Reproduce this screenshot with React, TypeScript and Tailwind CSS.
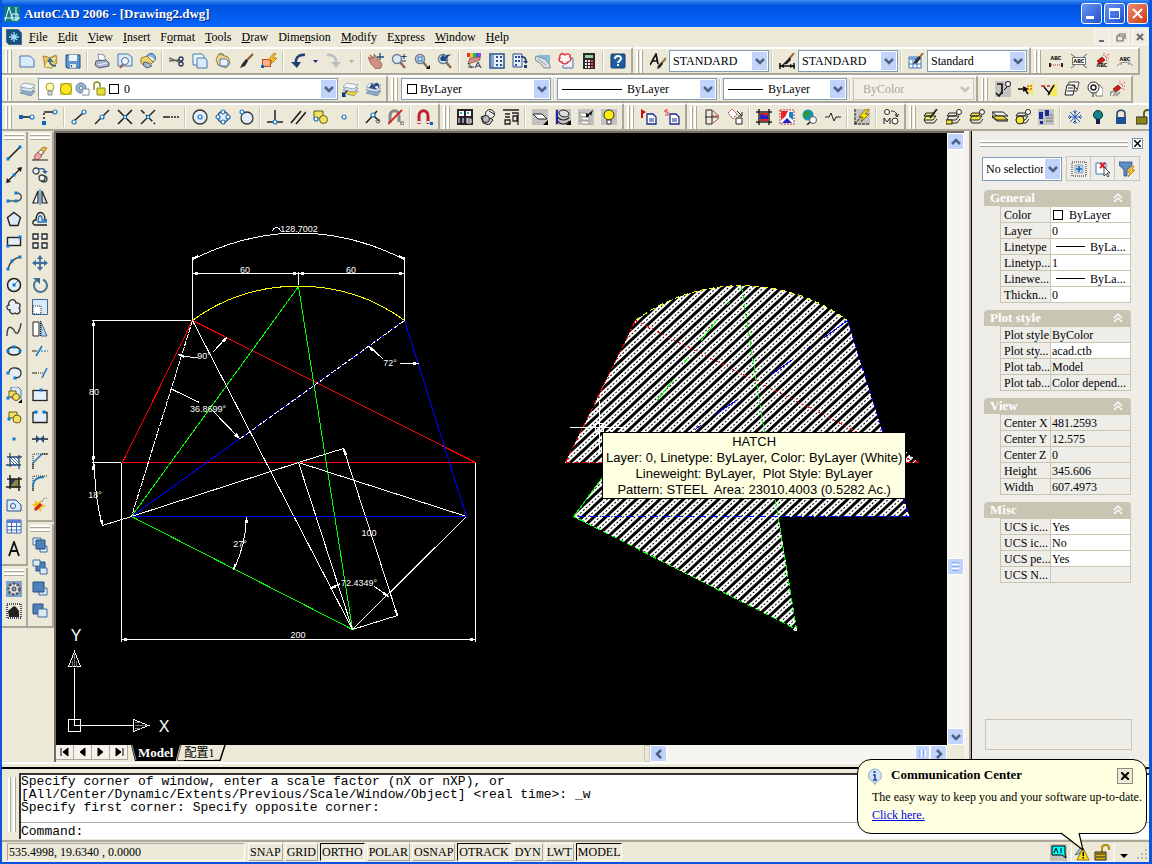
import React from "react";

const Ln = ({ d, c = "#222", w = 1, f = "none" }: { d: string; c?: string; w?: number; f?: string }) => (
  <path d={d} stroke={c} strokeWidth={w} fill={f} />
);
const Dot = ({ x, y }: { x: number; y: number }) => (
  <rect x={x - 1.5} y={y - 1.5} width="3" height="3" fill="#0a7bd8" />
);
const Ring = ({ x, y, r = 2 }: { x: number; y: number; r?: number }) => (
  <circle cx={x} cy={y} r={r} fill="#fff" stroke="#1673c4" strokeWidth="1.2" />
);
const Lens = ({ x = 6, y = 6 }: { x?: number; y?: number }) => (
  <>
    <path d={`M${x + 3} ${y + 3}l5 6`} stroke="#8a6a4a" strokeWidth="2.4" />
    <circle cx={x} cy={y} r="4.5" fill="#d6e9fa" stroke="#6f7f90" strokeWidth="1.5" />
  </>
);
const Stack = ({ c = "#8ea9c9" }: { c?: string }) => (
  <>
    <path d="M5 9l11 1-4 5L1 12z" fill={c} stroke="#5c7899" strokeWidth=".6" />
    <path d="M5 6l11 1-4 4L1 9z" fill="#dfe8f2" stroke="#5c7899" strokeWidth=".6" />
    <path d="M5 2l11 2-4 4L1 6z" fill="#f4f8fc" stroke="#5c7899" strokeWidth=".6" />
  </>
);
const Grey = () => <rect width="16" height="16" fill="#c3c2c0" />;
const Abc = ({ y }: { y: number }) => (
  <text x="8" y={y} fontSize="6" fontWeight="bold" textAnchor="middle" fontFamily="Liberation Mono, monospace">
    ABC
  </text>
);
const Burst = () => (
  <>
    <path d="M3 8l5-4 3 3-5 4z" fill="#d81818" stroke="#400" strokeWidth=".6" />
    <path d="M11 4l4-3M12 5h4M10 3V0M12 7l3 2" stroke="#e02020" strokeDasharray="1 1" />
  </>
);
const Sheets = ({ f = "none" }: { f?: string }) => (
  <>
    <path d="M3 4h9l-3 3H1zM3 7h10l-3 4H1z" fill={f} stroke="#222" />
    <path d="M1 11l2 3h8l3-4" fill="none" stroke="#222" />
  </>
);

const icons: Record<string, React.ReactNode> = {
  new: <path d="M1 3h10l4 4v7H1z" fill="#d8eafb" stroke="#4678ac" />,
  open: (
    <>
      <path d="M1 3l5 1 1 1 7-3 1 8-6 5-6-1z" fill="#e9c65c" stroke="#8a6c1c" strokeWidth=".7" />
      <path d="M2 14L6 6l9-3-5 12z" fill="#fbe79b" stroke="#a58428" strokeWidth=".6" />
      <path d="M14 13c-4 0-6-2-6-5M6 9l2-3 3 3" fill="none" stroke="#2c5d92" strokeWidth="1.6" />
    </>
  ),
  save: (
    <>
      <path d="M1 2h14v13H2l-1-1z" fill="#5e97cf" stroke="#234f80" />
      <path d="M4 2h8v6H4z" fill="#eef5fc" />
      <path d="M5 11h6v4H5z" fill="#dbe5ee" />
      <path d="M6 12h1v2H6z" fill="#234f80" />
    </>
  ),
  print: (
    <>
      <path d="M4 1l6 1 2 6-7-1z" fill="#fff" stroke="#6b7d99" strokeWidth=".8" />
      <path d="M2 8l10-1 3 3v3l-10 2-4-3z" fill="#a8b6cc" stroke="#3b4966" strokeWidth=".9" />
      <path d="M4 12l9-2" stroke="#eef" />
    </>
  ),
  preview: (
    <>
      <path d="M1 1h10l4 3v9H1z" fill="#d8eafb" stroke="#4678ac" />
      <path d="M6 11l-3 4" stroke="#a2543c" strokeWidth="2" />
      <circle cx="8" cy="8" r="3.5" fill="#f7fbff" stroke="#56677a" />
    </>
  ),
  publish: (
    <>
      <circle cx="11" cy="5" r="4.5" fill="#7fb4e4" stroke="#3565a0" />
      <path d="M8 3l4 1 3 3-4 2z" fill="#e7f1dc" />
      <path d="M1 5l6-2 6 6-6 6-6-5z" fill="#f1d36d" stroke="#7f6416" strokeWidth=".8" />
      <path d="M4 9l5 1 3 3-5 2-4-3z" fill="#a8b6cc" stroke="#3b4966" strokeWidth=".8" />
    </>
  ),
  cut: (
    <>
      <Ln d="M0 5l10 4M0 8l10-1" c="#666" w={1.5} />
      <Ln d="M10 6a2 2 0 1 1 4 0 2 2 0 1 1-4 0M10 11a2 2 0 1 1 4 0 2 2 0 1 1-4 0" c="#2b3c5e" w={1.4} />
    </>
  ),
  copy: (
    <>
      <path d="M1 1h9l2 2v9H1z" fill="#eef6fd" stroke="#4678ac" />
      <path d="M5 5h8l2 2v8H5z" fill="#d8eafb" stroke="#4678ac" />
    </>
  ),
  paste: (
    <>
      <path d="M4 1l9 3 2 6-4 5-8-3-2-6z" fill="#ecd48c" stroke="#96803c" />
      <path d="M5 6h6l2 2v5H5z" fill="#eaf3fc" stroke="#4678ac" />
      <path d="M4 1l3-1 2 2" fill="none" stroke="#777" />
    </>
  ),
  brush: (
    <>
      <Ln d="M15 1L8 8" c="#8c5a34" w={2.2} />
      <path d="M8 6l2 2-3 5-5 2 2-4z" fill="#2a2a30" />
    </>
  ),
  block: (
    <>
      <rect x="1.5" y="6.5" width="8" height="7" fill="#f7b08a" stroke="#c04c1c" />
      <rect x="0" y="12" width="3" height="3" fill="#0a66c8" />
      <path d="M13 0L7 7h4l-2 5 7-7h-4l3-5z" fill="#ffc21c" stroke="#a4650a" strokeWidth=".7" />
    </>
  ),
  undo: (
    <>
      <Ln d="M15 2C8 1 5 5 6 12" c="#1f3f74" w={2.6} />
      <path d="M1 9h10l-4 6z" fill="#1f3f74" />
    </>
  ),
  redo: (
    <>
      <Ln d="M1 2c7-1 10 3 9 10" c="#b9bdc6" w={2.6} />
      <path d="M5 9h10l-5 6z" fill="#b9bdc6" />
    </>
  ),
  pan: (
    <>
      <path d="M0 4l4 2-2-4 4 3 0-4 4 5 4 5-1 4-5 1-5-5z" fill="#d28f86" stroke="#8d463e" strokeWidth=".7" />
      <path d="M12 0v7M9 4h7" stroke="#234f80" strokeWidth="1.3" />
    </>
  ),
  zoomrt: (
    <>
      <Lens />
      <path d="M13 1v5M10.5 3.5h5M11 8h4" stroke="#1c3c6c" />
    </>
  ),
  zoomwin: (
    <>
      <Lens />
      <rect x="4" y="4" width="4" height="4" fill="none" stroke="#2c67a6" />
      <path d="M16 12v4h-4z" fill="#000" />
    </>
  ),
  zoomprev: (
    <>
      <Lens />
      <path d="M3 5l4-4v3c3-3 6-3 8-2-3 0-5 2-6 5l2 1H4z" fill="#23487c" />
    </>
  ),
  props: (
    <>
      <path d="M1 0h3v4H1z" fill="#e33" />
      <path d="M4 0h3v4H4z" fill="#ec2" />
      <path d="M7 0h3v4H7z" fill="#2b5" />
      <path d="M10 0h3v4h-3z" fill="#36e" />
      <path d="M13 0h2v4h-2z" fill="#c3d" />
      <path d="M4 5l10-1v3L8 9l-6 2z" fill="#d28f86" stroke="#7c3c36" strokeWidth=".7" />
      <Ln d="M2 10l4 5M2 14h6M9 15l3-6 3 6M10 13h4" c="#26364e" />
    </>
  ),
  dc: (
    <>
      <path d="M1 1h14v14H1z" fill="#e7f0fa" stroke="#26518a" strokeWidth="1.5" />
      <path d="M2 2h3v12H2z" fill="#7fa5d0" />
      <path d="M7 3h2v2H7zM11 3h2v2h-2zM7 7h2v2H7zM11 7h2v2h-2zM7 11h2v2H7zM11 11h2v2h-2z" fill="#26518a" />
    </>
  ),
  pal: (
    <>
      <path d="M1 1h9v13H1z" fill="#e7f0fa" stroke="#26518a" />
      <path d="M3 3h2v2H3zM6 3h2v2H6zM3 7h2v2H3zM6 7h2v2H6zM3 11h2v2H3z" fill="#26518a" />
      <Ln d="M9 4c4-1 5 2 5 5" c="#1f3f74" w={1.8} />
      <path d="M11 8h5l-2 3zM12 12h3v3h-3z" fill="#1f3f74" />
    </>
  ),
  sheet: (
    <>
      <path d="M2 2h13v9L9 8z" fill="#8db7de" />
      <path d="M1 3l9 3 5 6v3H9L5 10 0 7z" fill="#d9dedf" stroke="#7e8c96" />
      <Ln d="M3 6l8 6" c="#8fa0aa" />
    </>
  ),
  markup: (
    <>
      <path d="M5 5h10v10H5z" fill="#e4eefa" stroke="#56799f" />
      <path d="M1 2h12v10H1z" fill="#fdf4f4" />
      <path d="M3 1c2-1 3 0 4 1 2-2 6-1 5 2 2 2 0 5-2 5-2 3-6 2-6 0-3 0-4-3-2-4-1-2 0-3 1-4z" fill="none" stroke="#e0303a" strokeWidth="1.4" />
    </>
  ),
  calc: (
    <>
      <path d="M2 0h12v16H2z" fill="#2a2a2a" />
      <path d="M4 2h8v3H4z" fill="#9cc89c" />
      <path d="M4 7h2v2H4zM7 7h2v2H7zM4 10h2v2H4zM7 10h2v2H7zM4 13h2v2H4zM7 13h2v2H7z" fill="#eee" />
      <path d="M10 7h2v2h-2zM10 10h2v2h-2zM10 13h2v2h-2z" fill="#e44" />
    </>
  ),
  help: (
    <>
      <rect x="1" y="1" width="14" height="14" rx="1" fill="#1f5c9e" stroke="#163e6c" />
      <path d="M5 6c0-4 6-4 6-.5C11 8 8 8 8 10M8 11v2" fill="none" stroke="#fff" strokeWidth="2" />
    </>
  ),
  textstyle: (
    <>
      <Ln d="M0 12L6 1l2 10M3 8h5" c="#111" w={1.7} />
      <Ln d="M16 5l-5 6" c="#9a6a38" w={2} />
      <path d="M12 9l1 2-3 4-3 1 1-4z" fill="#333" />
    </>
  ),
  dimstyle: (
    <>
      <Ln d="M0 13h16M1 10v6M15 10v6" c="#111" w={1.5} />
      <path d="M1 13l4-2v4zM15 13l-4-2v4z" fill="#111" />
      <Ln d="M15 0l-5 6" c="#9a6a38" w={2} />
      <path d="M11 4l1 3-4 4-5 1 4-4z" fill="#222" />
    </>
  ),
  tablestyle: (
    <>
      <path d="M1 4h12v11H1z" fill="#fff" stroke="#3c74bc" />
      <path d="M1 4h12v3H1z" fill="#6da0dc" />
      <Ln d="M1 11h12M5 7v8M9 7v8" c="#3c74bc" />
      <Ln d="M15 0l-4 5" c="#9a6a38" w={2} />
      <path d="M11 3l2 2-4 5-4 1 2-4z" fill="#333" />
    </>
  ),
  abc1: (
    <>
      <Abc y={7} />
      <path d="M3 12h10" stroke="#b22" strokeDasharray="1 1" />
      <path d="M1 10h2v4H1zM13 10h2v4h-2z" fill="#222" />
    </>
  ),
  abc2: (
    <>
      <rect x="1.5" y="4.5" width="13" height="7" fill="#fff" stroke="#777" />
      <Abc y={10} />
      <Ln d="M0 1l4 3M16 1l-4 3M0 15l4-3M16 15l-4-3" c="#666" />
    </>
  ),
  abc3: (
    <>
      <Burst />
      <Abc y={14} />
    </>
  ),
  abc4: (
    <>
      <Abc y={8} />
      <Ln d="M0 13c4-5 12-5 16 0M4 9v3M12 9v3" c="#888" />
    </>
  ),
  layers: <Stack />,
  layercur: (
    <>
      <Stack c="#f0d038" />
      <path d="M0 16v-5l2 1 3-3 1 1-3 3 1 3z" fill="#123a7c" />
    </>
  ),
  layerback: (
    <>
      <Stack />
      <path d="M4 7l3-5 2 2c2-4 6-2 5 3-1-2-3-3-4-1l2 3z" fill="#2c5082" />
    </>
  ),
  et1: (
    <>
      <Grey />
      <Ln d="M2 3h5v10M1 12l3 3 3-4" c="#111" w={1.6} />
      <path d="M9 9l5-5" stroke="#111" />
      <circle cx="13" cy="3" r="2.5" fill="#fff" stroke="#111" />
    </>
  ),
  et2: (
    <>
      <path d="M7 8l8-7v14z" fill="#f6ea5c" />
      <path d="M0 8h7l3 5M5 6l4 2-4 2" stroke="#111" strokeWidth="1.6" fill="none" />
      <path d="M9 5h6M9 8h6" stroke="#c22" strokeDasharray="2 1" />
    </>
  ),
  et3: (
    <>
      <path d="M8 14L14 2h2v14z" fill="#f6ea5c" />
      <path d="M0 5h4M6 5h3" stroke="#c22" strokeWidth="1.5" />
      <Ln d="M7 14l6-10M3 6l6 7" c="#111" w={1.5} />
    </>
  ),
  et4: (
    <>
      <path d="M5 1h10l-2 9H4z" fill="#fff" stroke="#444" />
      <path d="M3 4h8l-2 10H1z" fill="#fff" stroke="#222" />
      <Ln d="M4 7h5M3 10h6M8 4l5 4" c="#222" />
    </>
  ),
  et5: (
    <>
      <path d="M9 4h4l3 4v7H9z" fill="#fff" stroke="#777" />
      <circle cx="6.5" cy="6.5" r="5.5" fill="#fff" stroke="#222" />
      <circle cx="6.5" cy="6.5" r="2.5" fill="none" stroke="#222" strokeWidth="1.5" />
      <Ln d="M6 12v4" />
    </>
  ),
  et6: (
    <>
      <Burst />
      <Ln d="M0 15c0-5 4-6 6-3l-3 3M6 15l4-4" c="#888" w={1.5} />
    </>
  ),
  snaptrack: (
    <>
      <Ln d="M2 8h9" c="#444" w={2} />
      <rect y="6" width="4" height="4" fill="#0a66b8" />
      <Ring x={13} y={8} />
    </>
  ),
  snapfrom: (
    <>
      <Ln d="M2 3h9" w={1.5} />
      <path d="M2 4v8" stroke="#222" strokeWidth="1.5" strokeDasharray="2 2" />
      <rect y="12" width="4" height="4" fill="#0a66b8" />
      <Ring x={13} y={3} />
    </>
  ),
  endp: (<><Ln d="M3 12L12 4" w={1.5} /><Ring x={3} y={13} /><Ring x={13} y={3} /></>),
  midp: (<><Ln d="M1 15L15 1" w={1.5} /><Ring x={8} y={8} /></>),
  inter: (<><Ln d="M1 1l14 14M15 1L1 15" w={1.6} /><Ring x={8} y={8} r={1.5} /></>),
  appint: (
    <>
      <Ln d="M1 15L15 1" w={1.5} />
      <path d="M1 1l14 14" stroke="#222" strokeWidth="1.5" strokeDasharray="5 2 2 2" />
      <Ring x={8} y={8} r={1.5} />
    </>
  ),
  ext: (<><Ln d="M0 8h7" w={1.5} /><path d="M8 8h8" stroke="#222" strokeWidth="1.5" strokeDasharray="2 1" /></>),
  center: (<><circle cx="8" cy="8" r="7" fill="#e2edf8" stroke="#333" strokeWidth="1.3" /><Ring x={8} y={8} /></>),
  quad: (
    <>
      <circle cx="8" cy="8" r="5.5" fill="#e2edf8" stroke="#333" strokeWidth="1.3" />
      <Ring x={8} y={3} /><Ring x={8} y={13} /><Ring x={3} y={8} /><Ring x={13} y={8} />
    </>
  ),
  tangent: (<><circle cx="9" cy="9" r="6" fill="#e2edf8" stroke="#333" strokeWidth="1.3" /><Ring x={4} y={3} /></>),
  perp: (<><Ln d="M8 1v11M0 13h16" w={1.5} /><Ring x={8} y={13} /></>),
  par: <Ln d="M1 14L11 2M6 15L16 3" w={1.7} />,
  insert: (
    <>
      <path d="M1 2h9v7H1z" fill="#f2e060" stroke="#6a5a12" />
      <circle cx="10.5" cy="10.5" r="4" fill="#f2e060" stroke="#6a5a12" />
      <Ring x={3} y={10} />
    </>
  ),
  node: <Ring x={8} y={8} />,
  nearest: (<><Ln d="M1 14L12 2M8 6l6 6" w={1.5} /><Ring x={8} y={6} /><circle cx="13" cy="12" r="2" fill="none" stroke="#666" /></>),
  nosnap: (
    <>
      <Ln d="M2 14V7c0-7 9-7 9 0v6" c="#888" w={3} />
      <Ln d="M0 15L14 1" c="#d22" w={1.8} />
      <rect x="13" y="13" width="3" height="3" fill="#fff" stroke="#555" />
    </>
  ),
  osnap: (
    <>
      <Ln d="M2 15V7c0-7 9-7 9 0v8" c="#c02030" w={3} />
      <Ln d="M.5 13h3M9.5 13h3" c="#eee" w={2} />
      <rect x="13" y="13" width="3" height="3" fill="#0a66b8" />
    </>
  ),
  lib: (
    <>
      <path d="M0 0h16v16H0z" fill="#222" />
      <path d="M2 2h5v5H2zM9 2h5v5H9z" fill="#fff" />
      <path d="M3 3h2v2H3zM10 3h2v2h-2z" fill="#2bb" />
      <Ln d="M2 9v5M6 9v5M10 9v5M10 10h4v4h-4M10 12h4" c="#fff" />
    </>
  ),
  bolt: (
    <>
      <path d="M1 8l6-2 6 5-4 5-6-2z" fill="#ccc" stroke="#222" />
      <circle cx="10" cy="5" r="4.5" fill="#eee" stroke="#222" />
      <circle cx="6" cy="10" r="3.5" fill="#bbb" stroke="#222" />
      <path d="M9 2l5 3" stroke="#222" />
    </>
  ),
  hanger: (
    <>
      <path d="M0 1h16M2 5h5M2 8h5M2 11h5v4H2z" stroke="#222" fill="none" strokeWidth="1.3" />
      <path d="M9 4h6v12M10 7h4v5h-4z" stroke="#222" fill="none" strokeWidth="1.3" />
    </>
  ),
  lay1: (<><Grey /><path d="M1 5h9l5 5H6z" fill="#fff" stroke="#222" /><path d="M16 11v5h-5z" /></>),
  lay2: (
    <>
      <Grey />
      <Ln d="M2 1v14" c="#22a" w={2} />
      <path d="M4 4c0-4 9-4 10 1 0 4-9 4-10-1z" fill="#ddd" stroke="#222" />
      <path d="M3 8c2 4 9 4 11 0M3 12c2 4 9 4 11 0" fill="none" stroke="#222" strokeWidth="1.2" />
      <path d="M16 11v5h-5z" />
    </>
  ),
  lay3: (
    <>
      <Grey />
      <path d="M1 4h6l4 4H4zM1 8h8l4 3H5zM1 12h8l4 3H5z" fill="#fff" stroke="#999" />
      <path d="M8 8V4l2 1 5-4-2 6-1-2-2 3z" fill="#111" />
    </>
  ),
  bulb: (
    <>
      <Grey />
      <circle cx="8" cy="6" r="5" fill="#ffee00" stroke="#333" />
      <path d="M6 11h4v4H6z" fill="#fff" stroke="#333" />
    </>
  ),
  pdoc: (
    <>
      <path d="M0 0l5 3-3 2v4H0z" fill="#c81414" />
      <path d="M6 5h6l3 3v7H6z" fill="#fff" stroke="#1a2a8c" strokeWidth="1.3" />
      <path d="M8 10h5M8 12h5" stroke="#1a2a8c" />
    </>
  ),
  sdoc: (
    <>
      <path d="M4 1H1v2h3v3H1" fill="none" stroke="#e03030" />
      <path d="M6 5h6l3 3v7H6z" fill="#fff" stroke="#1a2a8c" strokeWidth="1.3" />
      <path d="M8 10h5M8 12h5" stroke="#1a2a8c" />
    </>
  ),
  flip: (
    <>
      <path d="M2 1h6v14H2zM1 8h14" fill="none" stroke="#222" />
      <path d="M8 1l7 6H8M8 15l7-6" fill="none" stroke="#b44" />
    </>
  ),
  rotbox: (
    <>
      <path d="M1 4l4-4 5 5-4 5z" fill="#fff" stroke="#a33" strokeDasharray="2 1" />
      <path d="M9 9h6v6H9z" fill="#fff" stroke="#222" />
      <Ln d="M10 2l5 5M15 3v4h-4" />
    </>
  ),
  img1: (
    <>
      <Ln d="M3 0v16M13 0v16M0 3h16M0 13h16" w={1.5} />
      <path d="M4 4h8v8H4z" fill="#d22" />
      <path d="M4 6l3-1 2 2 3-1v4H4z" fill="#22c" />
    </>
  ),
  img2: (
    <>
      <path d="M1 1h14v14H1z" fill="#fff" stroke="#a33" strokeDasharray="2 1" />
      <path d="M2 2h7l-3 6-4 3z" fill="#e22" />
      <path d="M10 3h4v8l-4-3z" fill="#18c" />
      <path d="M3 14l5-5 5 5z" fill="#22c" />
    </>
  ),
  globe: (
    <>
      <circle cx="6" cy="6" r="5.5" fill="#1892b8" />
      <path d="M3 2l5 1-1 4-4 2-2-3z" fill="#2a9a3c" />
      <circle cx="11" cy="11" r="3.5" fill="#fff" stroke="#555" />
      <Ln d="M8 13l-3 3" w={1.5} />
    </>
  ),
  pulse: <Ln d="M0 8h4l2-4 3 8 2-4h5" />,
  flash: (
    <>
      <Grey />
      <path d="M1 0v16M0 15h16M1 15L12 2" stroke="#222" strokeDasharray="3 1" />
      <path d="M12 0L5 8h4l-2 5 8-8h-4l4-5z" fill="#ffe600" stroke="#554400" strokeWidth=".7" />
    </>
  ),
  mo: (
    <>
      <circle cx="4" cy="3" r="2.5" fill="#fff" stroke="#222" />
      <Ln d="M8 2c4 0 6 2 6 5M12 5l2 3 2-3M1 15V9l3 4 3-4v6" />
      <circle cx="12" cy="12" r="3" fill="#fff" stroke="#222" />
    </>
  ),
  ly1: (<><Sheets f="#f4ee7a" /><Ln d="M14 0L7 9" w={1.8} /></>),
  ly2: (<><Sheets /><rect x="0" y="11" width="6" height="4" fill="#f2e63c" stroke="#222" /><circle cx="13" cy="3" r="2.5" fill="#fff" stroke="#222" /></>),
  ly3: (<><Sheets f="#f2e63c" /><circle cx="13" cy="3" r="2.5" fill="#fff" stroke="#222" /></>),
  ly4: (<><path d="M0 3h11l5 4H5z" fill="#eee" stroke="#222" /><path d="M0 7h11l5 4H5z" fill="#e8dc30" stroke="#222" /><path d="M0 4v4l5 4h11" fill="none" stroke="#222" /></>),
  ly5: (<><Sheets /><circle cx="5" cy="11" r="4" fill="#f2e63c" stroke="#222" /><circle cx="13" cy="3" r="2.5" fill="#fff" stroke="#222" /></>),
  ly6: (<><Grey /><path d="M1 3h4v7H1zM2 12h3v3H2zM7 1h4v6H7z" fill="#1a2a9c" /><Ln d="M8 9h7M8 12h7M12 6h3" c="#777" /></>),
  freeze: <Ln d="M8 1v14M1 8h14M3 3l10 10M13 3L3 13M6 2l2 2 2-2M6 14l2-2 2 2M2 6l2 2-2 2M14 6l-2 2 2 2" c="#2b5cb8" />,
  off: (<><circle cx="8" cy="6" r="4.5" fill="#17818c" stroke="#033" /><path d="M6 10h4v5H6z" fill="#124" /></>),
  lock: (<><path d="M4 8V5c0-5 8-5 8 0v3" fill="none" stroke="#1a3c6c" strokeWidth="1.5" /><path d="M3 8h10v7H3z" fill="#1c4f94" /></>),
  unlock: (<><path d="M8 8V4c0-4 7-4 7 0v2" fill="none" stroke="#5c5810" strokeWidth="1.8" /><path d="M0 8h11v7H0z" fill="#8c8414" stroke="#333" /></>),
  line: (<><Ln d="M2 14L14 2" w={1.6} /><Dot x={2} y={14} /><Dot x={14} y={2} /></>),
  xline: (<><Ln d="M1 15L15 1" w={1.5} /><path d="M0 16l1-5 4 4zM16 0l-5 1 4 4z" fill="#222" /><Dot x={8} y={8} /></>),
  pline: (<><Ln d="M2 12h8c7 0 7-8 0-8" c="#555" w={1.5} /><Dot x={2} y={12} /><Dot x={10} y={12} /><Dot x={10} y={4} /></>),
  polygon: <path d="M8 1.5l6.5 5-2.5 8H4L1.5 6.5z" fill="#dbe8f6" stroke="#222" strokeWidth="1.4" />,
  rect: (<><rect x="1.5" y="4.5" width="13" height="8" fill="#e4effa" stroke="#222" strokeWidth="1.4" /><Dot x={2} y={13} /><Dot x={14} y={4} /></>),
  arc: (<><Ln d="M2 14C3 8 8 3 14 2" c="#444" w={1.5} /><Dot x={2} y={14} /><Dot x={6} y={6} /><Dot x={14} y={2} /></>),
  circle: (<><circle cx="8" cy="8" r="6.5" fill="#e4effa" stroke="#222" strokeWidth="1.5" /><Ln d="M8 8l4-4" c="#0a7bd8" /><Dot x={8} y={8} /></>),
  cloud: <path d="M5 1c3-1 5 1 5 3 4-1 5 3 3 5 3 4-1 7-4 5-2 2-6 0-5-3-4 0-4-5-1-5-1-3 0-4 2-5z" fill="#e8eef4" stroke="#333" strokeWidth="1.3" />,
  spline: <Ln d="M1 15c0-14 6-8 8-4s5-1 6-9" c="#444" w={1.4} />,
  ellipse: (<><ellipse cx="8" cy="8" rx="6.5" ry="4" fill="#e4effa" stroke="#222" strokeWidth="1.4" /><Dot x={2} y={8} /><Dot x={14} y={8} /><Dot x={8} y={4} /></>),
  ellarc: (<><path d="M3 7c1-6 12-5 12 1 0 3-2 5-6 5" fill="#e4effa" stroke="#333" strokeWidth="1.3" /><Dot x={2} y={8} /><Dot x={9} y={13} /></>),
  insblock: (
    <>
      <path d="M5 0h7l3 3v8H5z" fill="#d8eafb" stroke="#4678ac" />
      <path d="M3 4h7v6H3z" fill="#f2e060" stroke="#6a5a12" />
      <circle cx="10" cy="10" r="3.5" fill="#f2e060" stroke="#6a5a12" />
      <Dot x={2} y={11} />
      <path d="M16 12v4h-4z" />
    </>
  ),
  mkblock: (
    <>
      <path d="M3 3h8v6H3z" fill="#f2e060" stroke="#6a5a12" />
      <circle cx="11" cy="10" r="4" fill="#f2e060" stroke="#6a5a12" />
      <Dot x={3} y={10} />
    </>
  ),
  point: <Dot x={8} y={8} />,
  hatch: (
    <>
      <path d="M4 4h9v9H4z" fill="#fff" />
      <Ln d="M4 4l9 9M7 4l6 6M4 7l6 6M10 4l3 3M4 10l3 3" c="#3a74b4" />
      <Ln d="M1 4h15M0 12h15M4 0v14M13 2v14" c="#2a4a74" w={1.3} />
    </>
  ),
  gradient: (
    <>
      <path d="M4 4h9v9H4z" fill="#8c8440" />
      <path d="M4 4h6L4 12z" fill="#33375c" />
      <Ln d="M1 4h15M0 12h15M4 0v14M13 2v14" c="#222" w={1.5} />
    </>
  ),
  region: (<><path d="M1 3h9l5 5v6H1z" fill="#d8eafb" stroke="#26518a" /><circle cx="7" cy="9" r="2.5" fill="#fff" stroke="#26518a" /></>),
  table: (
    <>
      <path d="M1 1h14v13H1z" fill="#fff" stroke="#3c5cae" />
      <path d="M1 1h14v3H1z" fill="#5c80d0" />
      <Ln d="M1 7.5h14M1 11h14M5.5 4v10M10.5 4v10" c="#3c6cc0" />
    </>
  ),
  mtext: <Ln d="M3 15L8 1l5 14M5 10h6" c="#111" w={1.8} />,
  gear: (
    <>
      <path d="M0 0h16v16H0z" fill="#7ea2c8" />
      <circle cx="8" cy="8" r="5.5" fill="#ddd" stroke="#555" strokeWidth="2.5" strokeDasharray="2.5 1.5" />
      <circle cx="8" cy="8" r="2" fill="#7ea2c8" stroke="#444" />
    </>
  ),
  house: (
    <>
      <path d="M1 1h14v14H1z" fill="none" stroke="#556" strokeDasharray="1 1" strokeWidth="2" />
      <path d="M2 8l6-5 2 1 3 4v6H3z" fill="#222" />
    </>
  ),
  erase: (
    <>
      <path d="M3 10l8-8 4 1-7 10z" fill="#f0c040" stroke="#7c5c10" strokeWidth=".7" />
      <path d="M8 5l3 1-1 4-4-2z" fill="#fff" stroke="#555" strokeWidth=".6" />
      <path d="M3 10l3-3 4 4-4 4-4-1z" fill="#f0a0a0" stroke="#8c4444" strokeWidth=".7" />
      <Ln d="M0 15h16" c="#222" />
    </>
  ),
  copyobj: (
    <>
      <circle cx="4" cy="4" r="3" fill="#e4effa" stroke="#444" strokeWidth="1.3" />
      <circle cx="12" cy="12" r="3" fill="#ccd8e4" stroke="#444" strokeWidth="1.3" />
      <circle cx="10" cy="11" r="3" fill="#e4effa" stroke="#444" strokeWidth="1.3" />
      <Ln d="M7 2c4-1 6 0 6 3" c="#2c6298" w={1.5} />
      <path d="M10 4h6l-3 3z" fill="#2c6298" />
    </>
  ),
  mirror: (<><path d="M6 2v12H1z" fill="#fff" stroke="#222" strokeWidth="1.2" /><path d="M10 2v12h5z" fill="#cfdff0" stroke="#222" strokeWidth="1.2" /><Ln d="M8 0v16" c="#1673c4" /></>),
  offset: (<><Ln d="M15 14H3c-3 0-3-5 1-5 0-10 9-10 9 0h2" w={1.3} /><Ln d="M15 11H6c0-8 4-8 4-2v0h5" c="#1673c4" w={1.3} /></>),
  array: <path d="M1 1h5v5H1zM10 1h5v5h-5zM1 10h5v5H1zM10 10h5v5h-5z" fill="#e4effa" stroke="#222" strokeWidth="1.3" />,
  move: (<><Ln d="M8 2v12M2 8h12" c="#3c6c9c" w={1.8} /><path d="M8 0l3 4H5zM8 16l3-4H5zM0 8l4-3v6zM16 8l-4-3v6z" fill="#3c6c9c" /></>),
  rotate: (<><Ln d="M5 3a6.5 6.5 0 1 0 6-.5" c="#4c7494" w={2} /><path d="M1 1h7v6z" fill="#3c6c9c" /></>),
  scale: (<><path d="M.5.5h15v15H.5z" fill="#dceaf8" stroke="#3c6c9c" /><path d="M1 7h8v8H1z" fill="#fff" stroke="#222" strokeDasharray="1 1" /></>),
  stretch: (<><path d="M9 1l6 14H9z" fill="#b8d0e8" stroke="#3c6c9c" /><path d="M1 1h6v14H1z" fill="#fff" stroke="#222" /><path d="M8.5 0v16" stroke="#222" strokeDasharray="1 1" /></>),
  trim: (<><Ln d="M0 8h5" /><Ln d="M4 13L10 3" c="#1673c4" w={1.5} /><path d="M9 8h7" stroke="#1673c4" strokeDasharray="2 1" /></>),
  extend: (<><Ln d="M0 8h5" /><path d="M6 8h5" stroke="#222" strokeDasharray="1 1" /><Ln d="M10 13l5-10" c="#1673c4" w={1.5} /></>),
  brkpt: (<><rect x="1" y="3.5" width="14" height="10" fill="#e4effa" stroke="#222" strokeWidth="1.3" /><Dot x={9} y={3} /></>),
  brk: (<><path d="M4 3.5H1v10h14v-10h-3" fill="#e4effa" stroke="#222" strokeWidth="1.3" /><Dot x={4} y={3} /><Dot x={12} y={3} /></>),
  join: (<><Ln d="M0 8h16" w={1.5} /><path d="M4 4l4 4-4 4zM12 4L8 8l4 4z" fill="#23487c" /></>),
  chamfer: (<><path d="M1 16V1h15" fill="none" stroke="#222" strokeDasharray="1 1" /><Ln d="M1 16v-6M10 1h6" /><Ln d="M1 10l9-9" c="#1673c4" w={1.5} /></>),
  fillet: (<><path d="M1 16V1h15" fill="none" stroke="#222" strokeDasharray="1 1" /><Ln d="M1 12C1 5 5 2 12 2" c="#1673c4" w={1.8} /><Ln d="M1 16v-4" /></>),
  explode: (
    <>
      <path d="M3 3l3 3 3-3v4l5 2-5 2v4l-3-3-4 2 1-4-3-3h3z" fill="#f4c020" />
      <path d="M3 13l6-6" stroke="#d82020" strokeWidth="3" />
      <path d="M10 5c0-3 3-4 5-4" stroke="#777" strokeDasharray="2 1" fill="none" />
    </>
  ),
  front: (<><path d="M1 1h8v7H1zM8 9h7v6H8z" fill="#e4effa" stroke="#3c6c9c" /><path d="M4 3h9v9H4z" fill="#4f81b8" stroke="#244f84" /></>),
  back: (<><path d="M4 3h9v9H4z" fill="#4f81b8" stroke="#244f84" /><path d="M1 1h7v6H1zM8 9h7v6H8z" fill="#dfe9f3" stroke="#3c6c9c" /></>),
  above: (<><path d="M7 7h8v7H7z" fill="#dfe9f3" stroke="#3c6c9c" /><path d="M1 1h11v10H1z" fill="#4f81b8" stroke="#244f84" /></>),
  under: (<><path d="M1 1h10v10H1z" fill="#4f81b8" stroke="#244f84" /><path d="M6 6h9v8H6z" fill="#dfe9f3" stroke="#3c6c9c" /></>),
  quick: (<><path d="M1 1h14v14H1z" fill="none" stroke="#222" strokeDasharray="1 1" /><path d="M4 4h8v8H4z" fill="#bcd4ec" stroke="#9ab" /><path d="M8 5v6M5 8h6" stroke="#0a66b8" strokeWidth="1.5" /></>),
  pick: (<><path d="M1 2h10v11H1z" fill="#fff" stroke="#4678ac" /><Ln d="M5 2l5 5M10 2L5 7" c="#d81818" w={1.8} /><path d="M9 6v9l2-2 2 3 1-1-2-3h3z" fill="#fff" stroke="#222" strokeWidth=".8" /></>),
  filter: (<><path d="M0 1h13v3L8 9v6H5V9L0 4z" fill="#5f8fc0" stroke="#244f84" strokeWidth=".8" /><path d="M13 5l-5 6h3l-2 5 7-7h-3l2-4z" fill="#ffc21c" stroke="#a4650a" strokeWidth=".6" /></>),
};

const Icon = ({ name }: { name: string }) => (
  <svg width="16" height="16" viewBox="0 0 16 16" className="shrink-0" aria-hidden="true">
    {icons[name]}
  </svg>
);

const Sep = () => <span className="mx-[2px] h-5 w-[2px] shrink-0 border-l border-[#c9c6b5] bg-white" />;

// "|" is a separator, "v" a small flyout arrow, "w" a disabled one
const Tools = ({ items }: { items: string }) => (
  <>
    {items.split(" ").map((item, i) => {
      if (item === "|") return <Sep key={i} />;
      if (item === "v" || item === "w")
        return (
          <button key={i} aria-label="More" className="flex h-6 w-[13px] items-center justify-center">
            <svg width="5" height="3" viewBox="0 0 5 3">
              <path d="M0 0h5L2.5 3z" fill={item === "v" ? "#1a2f7c" : "#b0aea4"} />
            </svg>
          </button>
        );
      return (
        <button key={i} aria-label={item} className="flex h-6 w-[23px] shrink-0 items-center justify-center">
          <Icon name={item} />
        </button>
      );
    })}
  </>
);

const Grip = () => (
  <span className="mr-[3px] flex h-[23px] w-[7px] shrink-0 justify-between">
    <span className="w-[3px] border-r border-[#aca899] bg-white" />
    <span className="w-[3px] border-r border-[#aca899] bg-white" />
  </span>
);

const Section = ({ children }: { children: React.ReactNode }) => (
  <div className="flex h-7 shrink-0 items-center border-y-2 border-r-2 border-t-white border-r-[#aca899] border-b-[#aca899] pr-[2px] pl-[3px]">
    <Grip />
    {children}
  </div>
);

const Chevron = ({ dir = "M3 5l4 4 4-4", off = false }: { dir?: string; off?: boolean }) => (
  <svg width="14" height="14" viewBox="0 0 14 14" aria-hidden="true">
    <path d={dir} fill="none" stroke={off ? "#c5c3b8" : "#4d6185"} strokeWidth="2.5" />
  </svg>
);

const Combo = ({ label, value, width, off = false, children }: { label: string; value: string; width: string; off?: boolean; children?: React.ReactNode }) => (
  <div className={`flex h-[22px] shrink-0 items-center border p-px ${off ? "border-[#c9c7ba] bg-[#f2f0e8]" : "border-[#7f9db9] bg-white"} ${width}`}>
    {children}
    <select aria-label={label} disabled={off} className="min-w-0 flex-1 appearance-none bg-transparent px-[2px] text-[12px] leading-4 text-black outline-none disabled:text-[#aca899]">
      <option>{value}</option>
    </select>
    <span className={`flex h-[18px] w-[15px] shrink-0 items-center justify-center ${off ? "bg-[#f2f0e8]" : "bg-[#c1d3fb]"}`}>
      <Chevron off={off} />
    </span>
  </div>
);

const menus = [
  ["", "F", "ile"],
  ["", "E", "dit"],
  ["", "V", "iew"],
  ["", "I", "nsert"],
  ["F", "o", "rmat"],
  ["", "T", "ools"],
  ["", "D", "raw"],
  ["Dime", "n", "sion"],
  ["", "M", "odify"],
  ["E", "x", "press"],
  ["", "W", "indow"],
  ["", "H", "elp"],
];

const VSection = ({ items }: { items: string[] }) => (
  <div className="flex w-full flex-col items-center border-r-2 border-b-2 border-[#aca899] pt-px pb-1">
    <span className="mb-[2px] flex h-[7px] w-5 flex-col justify-between">
      <span className="h-[3px] border-b border-[#aca899] bg-white" />
      <span className="h-[3px] border-b border-[#aca899] bg-white" />
    </span>
    {items.map((item) => (
      <button key={item} aria-label={item} className="flex h-[22px] w-[23px] items-center justify-center">
        <Icon name={item} />
      </button>
    ))}
  </div>
);

const ScrollButton = ({ dir, label }: { dir: string; label: string }) => (
  <button aria-label={label} className="flex size-[17px] shrink-0 items-center justify-center rounded-[2px] border border-white bg-[#c1d3fb]">
    <Chevron dir={dir} />
  </button>
);

const properties = [
  {
    title: "General",
    rows: [
      ["Color", "ByLayer", "box"],
      ["Layer", "0", ""],
      ["Linetype", "ByLa...", "line"],
      ["Linetyp...", "1", ""],
      ["Linewe...", "ByLa...", "line"],
      ["Thickn...", "0", ""],
    ],
  },
  {
    title: "Plot style",
    rows: [
      ["Plot style", "ByColor", "ro"],
      ["Plot sty...", "acad.ctb", ""],
      ["Plot tab...", "Model", "ro"],
      ["Plot tab...", "Color depend...", "ro"],
    ],
  },
  {
    title: "View",
    rows: [
      ["Center X", "481.2593", "ro"],
      ["Center Y", "12.575", "ro"],
      ["Center Z", "0", "ro"],
      ["Height", "345.606", "ro"],
      ["Width", "607.4973", "ro"],
    ],
  },
  {
    title: "Misc",
    rows: [
      ["UCS ic...", "Yes", ""],
      ["UCS ic...", "No", ""],
      ["UCS pe...", "Yes", ""],
      ["UCS N...", "", "ro"],
    ],
  },
];

const Palette = () => (
  <aside className="flex w-[178px] shrink-0 flex-col border-l border-black bg-[#eeede8] pt-[6px]">
    <div className="flex h-3 items-center gap-1 pr-[6px] pl-2">
      <span className="flex h-[7px] flex-1 flex-col justify-between">
        <span className="h-[3px] border-b border-[#aca899] bg-white" />
        <span className="h-[3px] border-b border-[#aca899] bg-white" />
      </span>
      <button aria-label="Close palette" className="flex size-[11px] items-center justify-center border border-[#7a96b4] bg-white">
        <svg width="7" height="7" viewBox="0 0 7 7">
          <path d="M0 0l7 7M7 0L0 7" stroke="#000" strokeWidth="1.5" />
        </svg>
      </button>
    </div>
    <div className="mt-[7px] flex h-[25px] items-center gap-1 pl-[10px]">
      <div className="flex h-6 w-20 items-center border border-[#7f9db9] bg-white p-px">
        <select aria-label="Selection" className="min-w-0 flex-1 appearance-none bg-transparent px-[2px] text-[12px] outline-none">
          <option>No selection</option>
        </select>
        <span className="flex h-5 w-[15px] items-center justify-center bg-[#c1d3fb]">
          <Chevron />
        </span>
      </div>
      <div className="flex border border-[#c9c7ba]">
        {["quick", "pick", "filter"].map((name) => (
          <button key={name} aria-label={name} className="flex h-[23px] w-6 items-center justify-center border-r border-[#c9c7ba] last:border-r-0">
            <Icon name={name} />
          </button>
        ))}
      </div>
    </div>
    <div className="mt-[9px] flex flex-col gap-[7px] pr-[18px] pl-3">
      {properties.map((group) => (
        <section key={group.title}>
          <h2 className="flex h-4 items-center justify-between rounded-t-[4px] bg-[#c9c5b3] pr-2 pl-[6px] text-[13px] leading-4 font-bold text-white">
            {group.title}
            <svg width="10" height="10" viewBox="0 0 10 10" aria-hidden="true">
              <path d="M1 5l4-4 4 4M1 9l4-4 4 4" fill="none" stroke="#fff" strokeWidth="1.3" />
            </svg>
          </h2>
          <table className="ml-4 w-[131px] table-fixed border-collapse text-[12px] leading-[14px]">
            <tbody>
              {group.rows.map(([name, value, kind], i) => (
                <tr key={i} className="h-4">
                  <th className="w-[50px] overflow-hidden border border-[#c9c5b3] p-0 pl-[3px] text-left font-normal whitespace-nowrap">{name}</th>
                  <td className={`overflow-hidden border border-[#c9c5b3] p-0 pl-px whitespace-nowrap ${kind === "ro" ? "" : "bg-white"}`}>
                    <span className="flex h-[14px] items-center">
                      {kind === "box" && <span className="mr-[6px] ml-px size-[10px] border border-black" />}
                      {kind === "line" && <span className="mr-[5px] ml-1 h-px w-[29px] bg-black" />}
                      {value}
                    </span>
                  </td>
                </tr>
              ))}
            </tbody>
          </table>
        </section>
      ))}
    </div>
    <div className="mt-auto mr-[17px] mb-3 ml-[13px] h-[31px] border border-[#c9c5b3]" />
  </aside>
);

const labels: [number, number, string][] = [
  [299, 232, "128.7002"],
  [245, 273, "60"],
  [351, 273, "60"],
  [204, 359, "90°"],
  [208, 412, "36.8699°"],
  [390, 366, "72°"],
  [94, 395, "80"],
  [95, 498, "18°"],
  [240, 547, "27°"],
  [369, 536, "100"],
  [359, 586, "72.4349°"],
  [298, 638, "200"],
];

const Drawing = () => (
  <svg className="block h-full w-full" shapeRendering="crispEdges" role="img" aria-label="Model space">
    <defs>
      <pattern id="steel" width="20" height="8" patternUnits="userSpaceOnUse" patternTransform="rotate(-43)">
        <path d="M0 1h20M0 4h20" stroke="#fff" strokeWidth="2" />
        <path d="M0 2.5h20" stroke="#fff" strokeDasharray="2 2" />
      </pattern>
    </defs>
    <g transform="translate(-55.5 -132.5)" fill="none" stroke="#fff" strokeWidth="1">
      <path stroke="#f00" d="M192 320L122 462H475L192 320" />
      <path stroke="#00f" d="M466 516L404 320L131 516" />
      <path stroke="#0f0" d="M298 286L131 516L352 629L298 286" />
      <path stroke="#ff0" d="M192 320Q238 286 298 285.5Q358 286 404 320" />
      <path d="M192 320L352 629L466 516L298 462L352 629M131 516L298 462L343 448L397 615L352 629" />
      <path d="M192 320L131 516" strokeDasharray="6 1" />
      <path d="M240 438L404 320" strokeDasharray="5 2" />
      <path d="M192 320V256M404 320V256M192 259Q298 206 404 259M192 273H404M298 271V284" />
      <path d="M91 320H190M93 320V462M91 462H120M94 463Q94 496 102 525L131 516" />
      <path d="M121 462V641M475 462V641M121 639H475" />
      <path d="M178 354Q186 357 197 357M212 352L226 337M172 389L199 402M212 410L239 438M369 346L383 359M399 363H418M246 517Q245 546 233 569M330 588L340 583M374 586L388 596" />
      <path
        fill="#fff"
        d="M192 258l5-1v-2zM404 258l-5-1v-2zM192 273l5-1v2zM404 273l-5-1v2zM298 273l-5-1v2zM298 273l5-1v2zM93 320l-1 5h2zM93 462l-1-6h2zM93 463l-1 6h2zM102 525l-2-5h2zM121 639l5-1v2zM475 639l-5-1v2zM343 448l1 6h2zM397 615l-3-5h2zM239 438l-5-3 2-2zM369 346l2 4 2-1zM418 363l-5-1v2zM246 517l-1 5h2zM233 569l1-5h2zM388 596l-5-2 1-2zM330 588l5-1-1-2zM178 354l5 1v2zM226 337l-2 4-2-1zM172 389l5 2v1z"
      />
      <path d="M272 231q1-4 4-4t4 4" />
      <rect x="131.500" y="515.500" width="335" height="1" fill="#00f" stroke="none" />
      <path d="M68 719h12v12H68zM74 725V667M74 725H133M74 651L68 666H80zM148 725L133 719V731z" />
      <path d="M74 653v12M72 660v6M76 660v6M134 725h12M134 722h6M134 728h6" stroke="#777" />

      <g fill="url(#steel)" stroke="none">
        <path d="M565 462L635 320Q681 286 741 285Q801 286 847 320L882 431L918 462z" />
        <path d="M573 516L612 462H892L909 516z" />
        <path d="M573 516H778L796 629z" />
      </g>
      <path stroke="#ff0" strokeDasharray="5 4" d="M635 320Q681 286 741 285Q801 286 847 320" />
      <path stroke="#f00" strokeDasharray="5 3" d="M565 462L635 320M565 462H602M905 457L918 462M905 462H918" />
      <path stroke="#f00" strokeDasharray="3 3 2 4" d="M635 320L860 433" />
      <path stroke="#00f" strokeDasharray="5 3" d="M847 320L885 440M903 499L909 516" />
      <path stroke="#00f" d="M824 337L847 320M771 374L792 359M715 414L737 399M695 429L701 424M806 349L809 346" />
      <path stroke="#00f" strokeWidth="1" strokeDasharray="8 4" d="M909 516H573" />
      <path stroke="#0f0" strokeDasharray="6 3" d="M741 286L764 433M775 500L796 629L573 516" />
      <path stroke="#0f0" d="M573 516L602 477M700 341L716 320M656 401L673 379M726 305L729 302M683 363L688 357" />
      <path d="M569 427H625M599 400V454M595 423h8v8h-8z" />
      <circle cx="795" cy="629" r="1.5" />
    </g>
    <g transform="translate(-56 -133)" fill="#fff" fontFamily="Liberation Sans, sans-serif" textAnchor="middle">
      {labels.map(([x, y, text], i) => (
        <text key={i} x={x} y={y} fontSize="9">
          {text}
        </text>
      ))}
      <text x="76" y="641" fontSize="16">Y</text>
      <text x="164" y="732" fontSize="16">X</text>
    </g>
  </svg>
);

const navArrows = ["M3 1v8M10 1v8L5 5z", "M9 1v8L4 5z", "M4 1v8l5-4z", "M4 1v8l5-4zM11 1v8"];

const modes = [
  ["SNAP", false],
  ["GRID", false],
  ["ORTHO", true],
  ["POLAR", false],
  ["OSNAP", false],
  ["OTRACK", true],
  ["DYN", false],
  ["LWT", false],
  ["MODEL", true],
] as const;

const Balloon = () => (
  <div role="dialog" aria-label="Communication Center" className="absolute right-[2px] bottom-[28px] w-[290px]">
    <div className="h-[75px] rounded-[14px] border border-black bg-[#ffffe1] px-[14px] pt-2">
      <div className="flex items-start">
        <svg width="17" height="17" viewBox="0 0 17 17" aria-hidden="true" className="-ml-[6px]">
          <path d="M8.500 1a7 6.500 0 0 1 2 12.700L9 16.500l-2-3A7 6.500 0 0 1 8.500 1z" fill="#d4e2f6" stroke="#8fa8cc" />
          <path d="M7 7h2v5M7 12h4" fill="none" stroke="#1c4ca0" strokeWidth="1.6" />
          <path d="M7.500 3h2v2h-2z" fill="#1c4ca0" />
        </svg>
        <h2 className="ml-2 flex-1 text-[13px] leading-[14px] font-bold">Communication Center</h2>
        <button aria-label="Close" className="-mr-px flex size-4 items-center justify-center border border-[#8f8c7c] bg-[#ece9d8]">
          <svg width="8" height="8" viewBox="0 0 8 8">
            <path d="M0 0l8 8M8 0L0 8" stroke="#000" strokeWidth="2" />
          </svg>
        </button>
      </div>
      <p className="mt-1 text-[12px] leading-4 whitespace-nowrap">The easy way to keep you and your software up-to-date.</p>
      <a href="#updates" className="text-[12px] leading-5 text-[#0000f0] underline">
        Click here.
      </a>
    </div>
    <svg width="28" height="20" viewBox="0 0 28 20" className="absolute top-[73px] left-[202px]" aria-hidden="true">
      <path d="M2 0v1l22 17-4-17V0z" fill="#ffffe1" />
      <path d="M2 1l22 17-4-17" fill="none" stroke="#000" strokeWidth="1.2" />
    </svg>
  </div>
);

const App = () => {
  return (
    <div className="relative flex h-screen flex-col overflow-hidden border-r-[3px] border-b-2 border-l-2 border-[#0a55e0] bg-[#ece9d8] font-['Liberation_Serif','Noto_Sans_CJK_TC',serif] text-[12px] text-black">
      {/* Title bar */}
      <header className="flex h-[27px] shrink-0 items-center bg-linear-to-b from-[#3a8bee] via-[#0053e1] via-20% to-[#0565fb] pl-[2px]">
        <svg width="16" height="16" viewBox="0 0 16 16" aria-hidden="true">
          <path d="M0 0h16v16H0z" fill="#0e7a80" />
          <path d="M0 12h16M1 15L5 1l3 11M12 1v14M8 8h6v6H8z" fill="none" stroke="#e6ffff" />
        </svg>
        <h1 className="ml-1 flex-1 text-[13px] font-bold text-white [text-shadow:1px_1px_0_#0a2a80]">AutoCAD 2006 - [Drawing2.dwg]</h1>
        <div className="flex gap-[2px] pr-px">
          <button aria-label="Minimize" className="flex size-[21px] items-end rounded-[3px] border border-white bg-linear-to-br from-[#6d95f0] to-[#1c4fd0] p-1">
            <span className="h-[3px] w-2 bg-white" />
          </button>
          <button aria-label="Restore" className="flex size-[21px] items-center justify-center rounded-[3px] border border-white bg-linear-to-br from-[#6d95f0] to-[#1c4fd0]">
            <span className="size-[11px] border border-t-[3px] border-white" />
          </button>
          <button aria-label="Close" className="flex size-[21px] items-center justify-center rounded-[3px] border border-white bg-linear-to-br from-[#ee8b6c] to-[#cc3410]">
            <svg width="11" height="11" viewBox="0 0 11 11">
              <path d="M1 1l9 9M10 1l-9 9" stroke="#fff" strokeWidth="2" />
            </svg>
          </button>
        </div>
      </header>

      {/* Menu bar */}
      <nav className="flex h-5 shrink-0 items-center pl-1">
        <svg width="16" height="16" viewBox="0 0 16 16" aria-hidden="true">
          <path d="M0 0h12l4 4v12H3l-3-3z" fill="#16507e" stroke="#8aa" strokeWidth=".7" />
          <path d="M8 3v10M3 8h10M5 5l6 6M11 5l-6 6" stroke="#9fe0f8" strokeWidth="1.3" />
        </svg>
        <div className="ml-[7px] flex flex-1 gap-[10px]">
          {menus.map(([pre, key, post]) => (
            <button key={pre + key + post}>
              {pre}
              <u>{key}</u>
              {post}
            </button>
          ))}
        </div>
        <div className="flex gap-[3px] pr-px">
          {["M3 10h5", "M4 3h6v5M4 3v2M2 5h6v5H2z", "M3 3l6 6M9 3l-6 6"].map((d, i) => (
            <button key={d} aria-label={["Minimize drawing", "Restore drawing", "Close drawing"][i]} className="flex size-4 items-center justify-center border border-[#f8f7f2] bg-[#efede3]">
              <svg width="12" height="12" viewBox="0 0 12 12">
                <path d={d} fill="none" stroke="#6a6a66" strokeWidth={i === 1 ? 1.2 : 2} />
              </svg>
            </button>
          ))}
        </div>
      </nav>

      {/* Toolbars */}
      <div className="flex shrink-0 overflow-hidden">
        <Section>
          <Tools items="new open save | print preview publish | cut copy paste brush block | undo v redo w | pan zoomrt zoomwin zoomprev | props dc pal sheet markup calc | help" />
        </Section>
        <Section>
          <Tools items="textstyle" />
          <Combo label="Text style" value="STANDARD" width="w-[100px]" />
          <Sep />
          <Tools items="dimstyle" />
          <Combo label="Dimension style" value="STANDARD" width="w-[100px]" />
          <Sep />
          <Tools items="tablestyle" />
          <Combo label="Table style" value="Standard" width="w-[100px]" />
        </Section>
        <Section>
          <Tools items="abc1 abc2 abc3 abc4" />
        </Section>
      </div>
      <div className="flex shrink-0 overflow-hidden">
        <Section>
          <Tools items="layers" />
          <Combo label="Layer" value="0" width="w-[300px]">
            <svg width="66" height="16" viewBox="0 0 66 16" className="ml-[3px] shrink-0" aria-hidden="true">
              <circle cx="7" cy="6" r="4" fill="#fffbb0" stroke="#a89a28" />
              <path d="M5 10h4v4H5z" fill="#ddd" stroke="#888" />
              <path d="M17 2h12v12H17z" fill="#d8cc50" />
              <circle cx="23" cy="8" r="5.5" fill="#ffe820" stroke="#a08a10" />
              <circle cx="38" cy="7" r="5" fill="#9fb8d0" stroke="#5a7c9c" />
              <circle cx="38" cy="7" r="2" fill="#dfeaf4" stroke="#5a7c9c" />
              <path d="M41 8h5v6h-7" fill="#fff" stroke="#888" />
              <path d="M51 9V4c0-4 6-4 6 0v2" fill="none" stroke="#8a8a20" strokeWidth="1.5" />
              <path d="M54 7h8v7h-8z" fill="#e8dc30" stroke="#8a8a20" />
            </svg>
            <span className="mr-[3px] size-[10px] shrink-0 border border-black" />
          </Combo>
          <Tools items="layercur layerback" />
        </Section>
        <Section>
          <Combo label="Color" value="ByLayer" width="w-[150px]">
            <span className="mr-px ml-1 size-[10px] shrink-0 border border-black" />
          </Combo>
          <Sep />
          <Combo label="Linetype" value="ByLayer" width="w-[160px]">
            <span className="mr-[3px] ml-[3px] h-px w-[60px] shrink-0 bg-black" />
          </Combo>
          <Sep />
          <Combo label="Lineweight" value="ByLayer" width="w-[124px]">
            <span className="mr-[3px] ml-[3px] h-px w-[35px] shrink-0 bg-black" />
          </Combo>
          <Sep />
          <Combo label="Plot style" value="ByColor" width="w-[121px]" off>
            <span className="w-[6px]" />
          </Combo>
        </Section>
        <Section>
          <Tools items="et1 et2 et3 et4 et5 et6" />
        </Section>
      </div>
      <div className="flex shrink-0 overflow-hidden">
        <Section>
          <Tools items="snaptrack snapfrom | endp midp inter appint ext | center quad tangent | perp par insert node | nearest nosnap | osnap" />
        </Section>
        <Section>
          <Tools items="lib bolt hanger | lay1 lay2 lay3 bulb" />
        </Section>
        <Section>
          <Tools items="pdoc sdoc" />
        </Section>
        <Section>
          <Tools items="flip rotbox | img1 img2 globe pulse | flash | mo" />
        </Section>
        <Section>
          <Tools items="ly1 ly2 ly3 ly4 ly5 ly6 | freeze off lock unlock" />
        </Section>
      </div>

      {/* Work area */}
      <main className="flex min-h-0 flex-1">
        <div className="flex w-[52px] shrink-0 pt-px">
          <div className="flex w-[26px] flex-col gap-[2px]">
            <VSection items={["line", "xline", "pline", "polygon", "rect", "arc", "circle", "cloud", "spline", "ellipse", "ellarc", "insblock", "mkblock", "point", "hatch", "gradient", "region", "table", "mtext"]} />
            <VSection items={["gear", "house"]} />
          </div>
          <div className="flex w-[26px] flex-col gap-[2px]">
            <VSection items={["erase", "copyobj", "mirror", "offset", "array", "move", "rotate", "scale", "stretch", "trim", "extend", "brkpt", "brk", "join", "chamfer", "fillet", "explode"]} />
            <VSection items={["front", "back", "above", "under"]} />
          </div>
        </div>

        <div className="flex min-w-0 flex-1 flex-col border-t-2 border-l-2 border-[#716f64]">
          <div className="flex min-h-0 flex-1">
            <div className="relative min-w-0 flex-1 overflow-hidden bg-black">
              <Drawing />
              <div role="tooltip" className="absolute top-[299px] left-[546px] border border-black bg-[#ffffe1] px-[2px] pt-px text-center font-['Liberation_Sans',sans-serif] text-[13px] leading-4 whitespace-pre">
                <p>HATCH</p>
                <p className="px-px">Layer: 0, Linetype: ByLayer, Color: ByLayer (White)</p>
                <p>Lineweight: ByLayer,  Plot Style: ByLayer</p>
                <p>Pattern: STEEL  Area: 23010.4003 (0.5282 Ac.)</p>
              </div>
            </div>
            <div className="flex w-[17px] flex-col bg-[#f6f5f1]">
              <ScrollButton dir="M3 9l4-4 4 4" label="Scroll up" />
              <span className="grow-[8]" />
              <span className="flex h-[17px] flex-col justify-center gap-px rounded-[2px] border border-white bg-[#c1d3fb] px-1">
                <span className="h-px bg-[#8fb0f4]" />
                <span className="h-px bg-white" />
                <span className="h-px bg-[#8fb0f4]" />
                <span className="h-px bg-white" />
                <span className="h-px bg-[#8fb0f4]" />
              </span>
              <span className="grow-[3]" />
              <ScrollButton dir="M3 5l4 4 4-4" label="Scroll down" />
            </div>
          </div>
          <div className="flex h-[17px] shrink-0">
            {navArrows.map((d, i) => (
              <button key={d} aria-label={["First tab", "Previous tab", "Next tab", "Last tab"][i]} className="flex h-[15px] w-[18px] items-center justify-center border-r border-b border-[#aca899] bg-[#f4f2ea]">
                <svg width="13" height="10" viewBox="0 0 13 10">
                  <path d={d} fill="#000" stroke="#000" />
                </svg>
              </button>
            ))}
            <button className="ml-[3px] flex h-4 items-center bg-black pr-[3px] text-[13px] leading-4 font-bold text-white">
              <svg width="7" height="16" viewBox="0 0 7 16">
                <path d="M0 0v16h4z" fill="#ece9d8" />
                <path d="M1 0l4 15" stroke="#888" />
              </svg>
              Model
            </button>
            <button className="flex h-4 items-center text-[12px] leading-4">
              <svg width="8" height="16" viewBox="0 0 8 16">
                <path d="M0 0h4L0 15z" fill="#000" />
                <path d="M5 0L1 15.5h7" fill="none" stroke="#555" />
              </svg>
              <span className="h-4 border-b border-black">配置1</span>
              <svg width="12" height="16" viewBox="0 0 12 16">
                <path d="M0 15.5h6L11 0" fill="none" stroke="#000" strokeWidth="1.5" />
              </svg>
            </button>
            <div className="ml-auto flex w-[320px] bg-[#f6f5f1]">
              <span className="w-[6px] border border-[#c9c7ba] bg-[#ece9d8]" />
              <ScrollButton dir="M9 3L5 7l4 4" label="Scroll left" />
              <span className="flex-1" />
              <span className="flex w-[15px] items-center justify-center gap-px rounded-[2px] border border-white bg-[#c1d3fb]">
                <span className="h-[7px] w-px bg-[#8fb0f4]" />
                <span className="h-[7px] w-px bg-white" />
                <span className="h-[7px] w-px bg-[#8fb0f4]" />
                <span className="h-[7px] w-px bg-white" />
              </span>
              <ScrollButton dir="M5 3l4 4-4 4" label="Scroll right" />
              <span className="w-[17px] bg-[#ece9d8]" />
            </div>
          </div>
        </div>
        <div className="w-[7px] shrink-0 border-r-2 border-[#aca899] bg-[#f4f2ea]" />
        <Palette />
      </main>

      {/* Command window */}
      <section className="flex h-[78px] shrink-0 flex-col border-t-2 border-white pt-[3px]">
        <div className="flex flex-1 border-t-2 border-black pt-1 pl-[6px]">
          <span className="mt-1 mr-[2px] mb-2 flex w-[9px] gap-[2px]">
            <span className="w-[3px] border-r border-[#aca899] bg-white" />
            <span className="w-[3px] border-r border-[#aca899] bg-white" />
          </span>
          <div className="mb-px flex flex-1 flex-col border-t-2 border-l-2 border-[#333] bg-white font-['Liberation_Mono',monospace] text-[13px] leading-[13px]">
            <pre className="flex-1 [font-family:inherit]">{`Specify corner of window, enter a scale factor (nX or nXP), or
[All/Center/Dynamic/Extents/Previous/Scale/Window/Object] <real time>: _w
Specify first corner: Specify opposite corner:`}</pre>
            <div className="flex h-[17px] items-center border-t border-[#aca899]">
              <label htmlFor="command">Command:</label>
              <input id="command" className="min-w-0 flex-1 bg-transparent pl-1 outline-none" />
            </div>
          </div>
        </div>
      </section>

      {/* Status bar */}
      <footer className="flex h-[22px] shrink-0 items-center gap-[2px] border-t-2 border-[#aca899] pl-[5px]">
        <div className="mr-px h-[18px] w-[238px] border border-[#aca899] border-r-white border-b-white pl-px leading-4">535.4998, 19.6340 , 0.0000</div>
        {modes.map(([name, on]) => (
          <button
            key={name}
            aria-pressed={on}
            className={`h-[18px] border px-px leading-4 ${on ? "border-t-black border-r-white border-b-white border-l-black" : "border-t-white border-r-[#aca899] border-b-[#aca899] border-l-white"}`}
          >
            {name}
          </button>
        ))}
        <div className="ml-auto flex items-center pr-px">
          <svg width="98" height="19" viewBox="0 0 98 19" aria-hidden="true">
            <path d="M0 1h17v17H0z" fill="#c3c2b8" />
            <path d="M2 3h13v8l1 4-4-3H2z" fill="#0ff" stroke="#000" />
            <path d="M4 10l2-5 2 5M11 5v5" fill="none" stroke="#000" />
            <path d="M21.5 1v17.5H64V1" fill="none" stroke="#fff" />
            <path d="M25 12l6-8 3 5z" fill="#a8b8cc" stroke="#5c6c84" />
            <path d="M33 5l6 12H27z" fill="#ffe020" stroke="#907800" />
            <path d="M32.5 9h1.5v4h-1.5zM32.5 14h1.5v1.5h-1.5z" />
            <path d="M52 9V5c0-4 7-4 7 0v2" fill="none" stroke="#b09010" strokeWidth="2" />
            <path d="M45 9h11v8H45z" fill="#d8b010" stroke="#222" />
            <path d="M46 11h9M46 14h9" stroke="#222" />
            <path d="M70 11h8l-4 4z" />
            <path d="M95 6h2v2h-2zM91 10h2v2h-2zM95 10h2v2h-2zM87 14h2v2h-2zM91 14h2v2h-2zM95 14h2v2h-2z" fill="#b8b5a4" />
          </svg>
        </div>
      </footer>

      <Balloon />
    </div>
  );
};

export default App;
